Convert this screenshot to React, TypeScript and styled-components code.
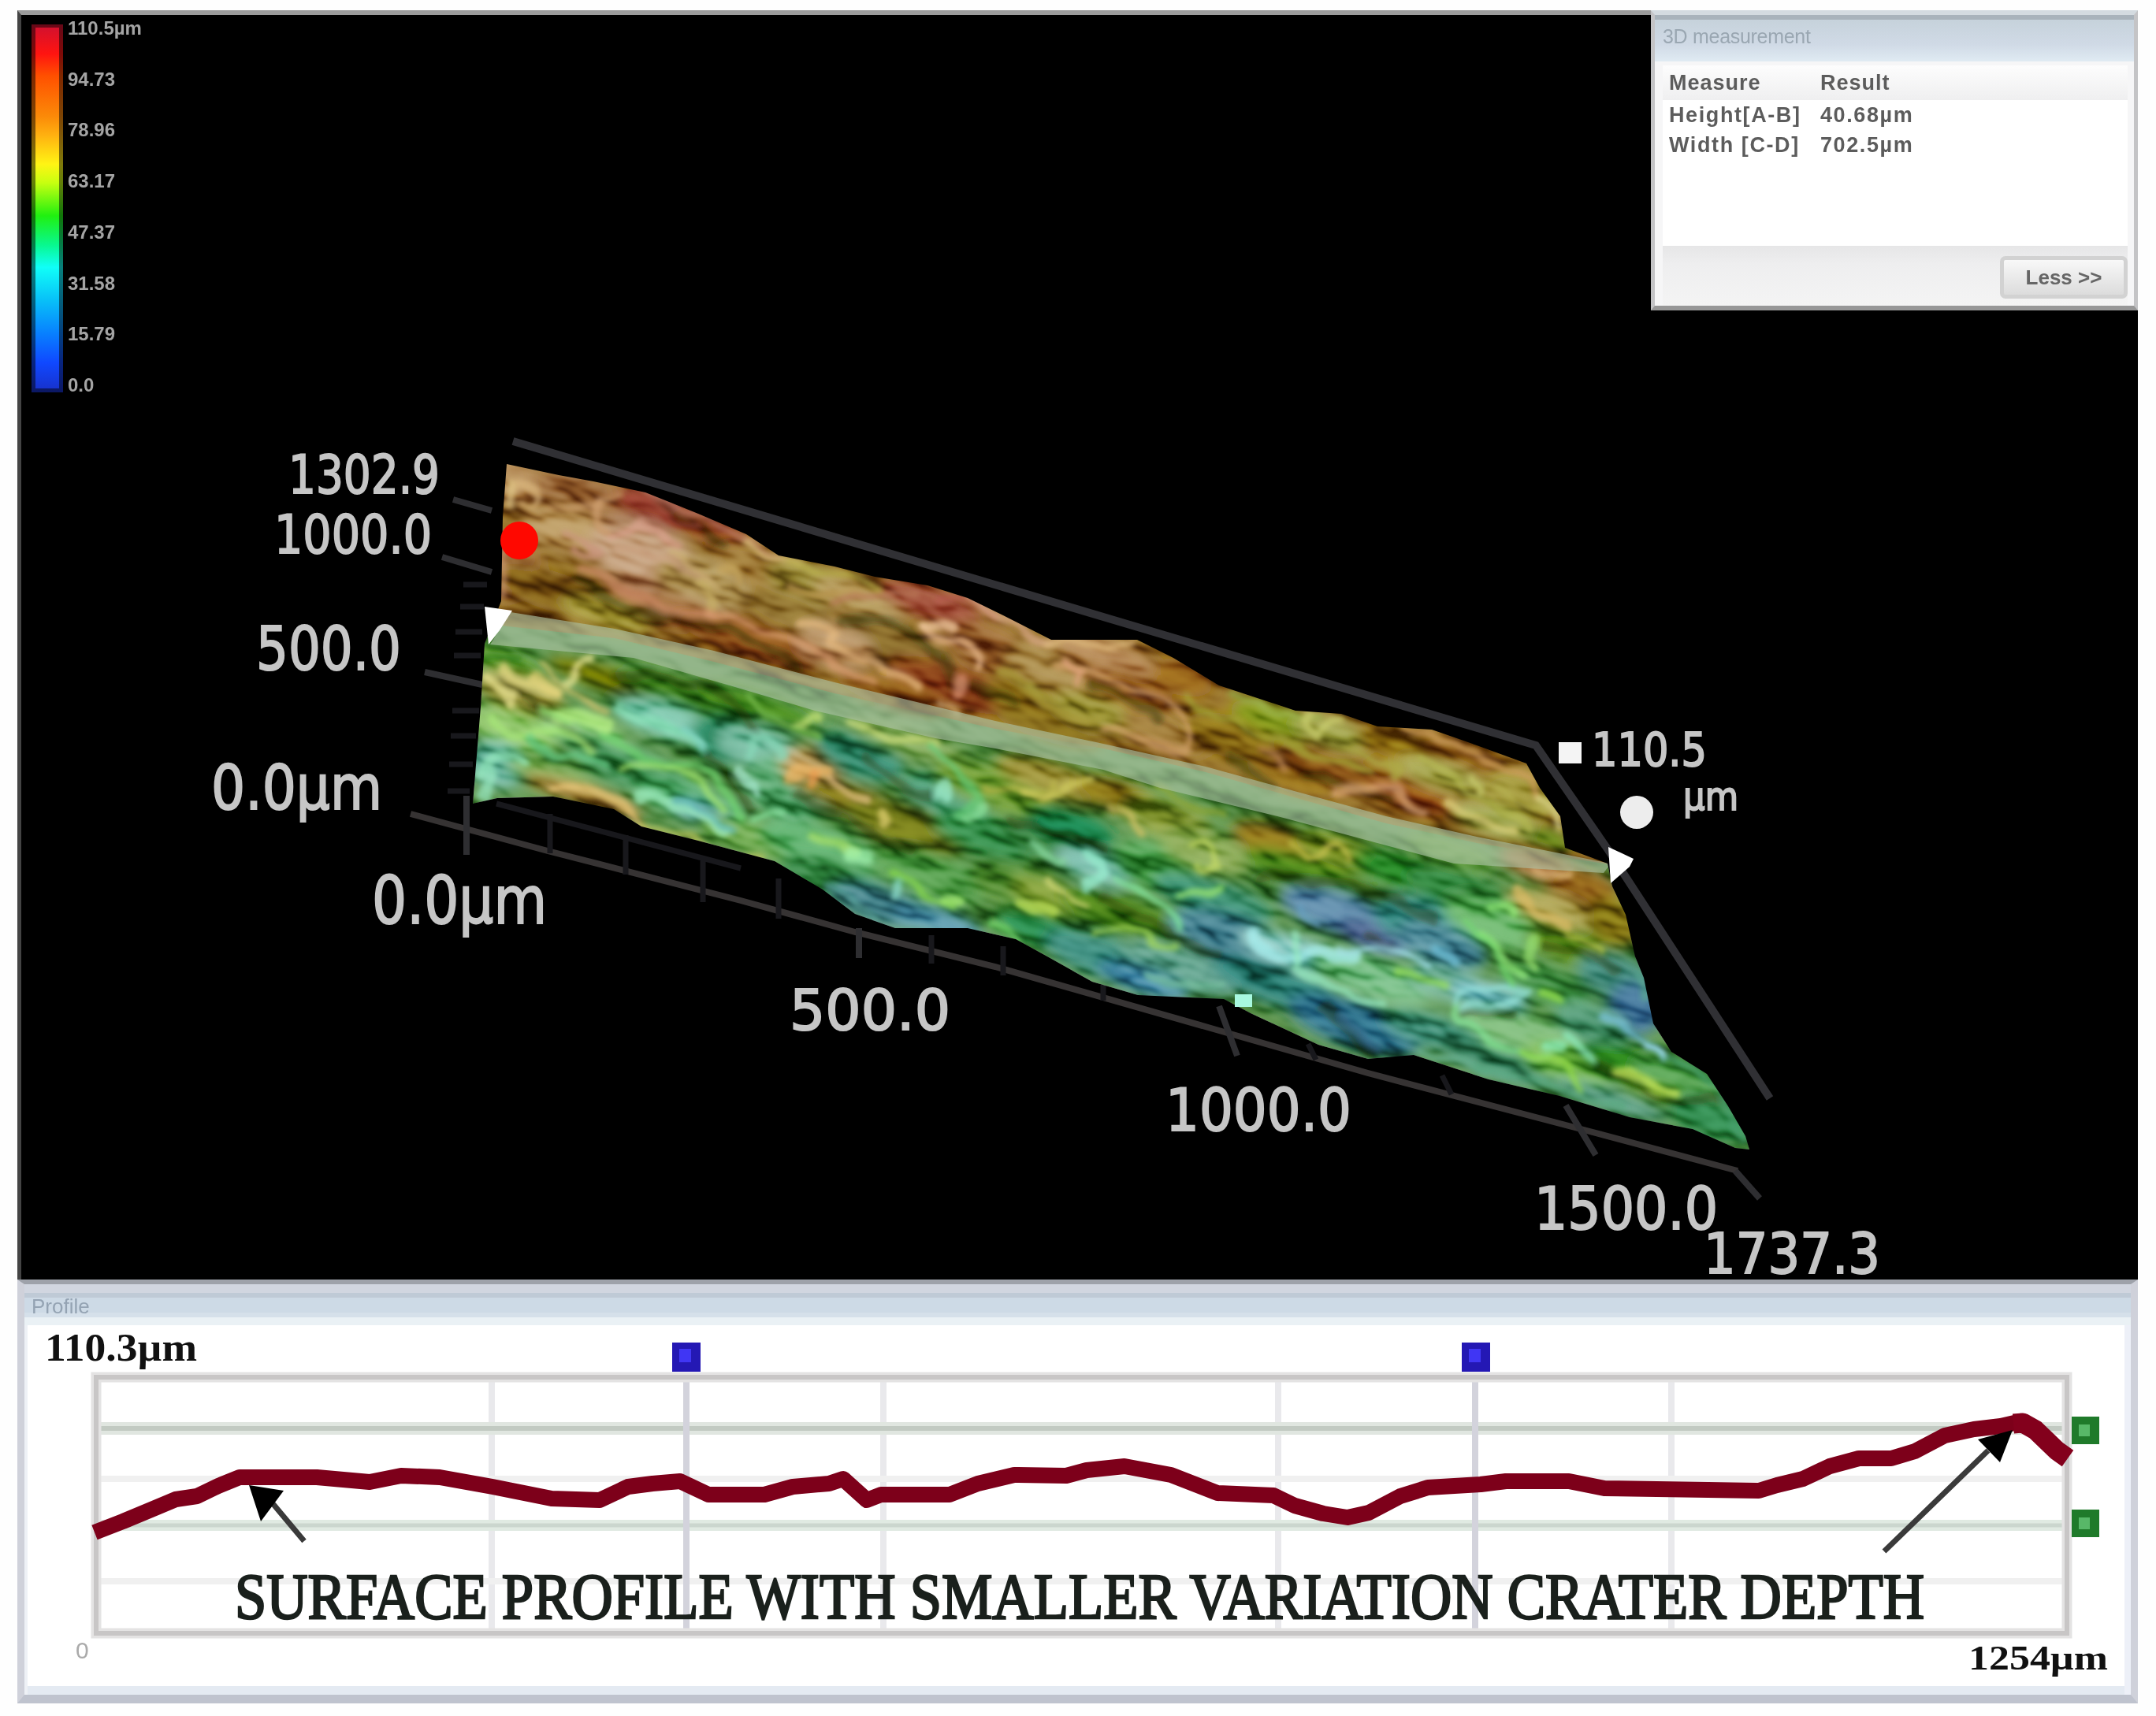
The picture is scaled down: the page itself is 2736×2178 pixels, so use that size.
import React from 'react'
import styled, { createGlobalStyle } from 'styled-components'

const GlobalStyle = createGlobalStyle`
  * {
    box-sizing: border-box;
  }

  body {
    margin: 0;
    background: #fefefe;
  }
`

const Page = styled.div`
  width: 2736px;
  height: 2178px;
  padding: 13px 23px 16px 22px;
  display: flex;
  flex-direction: column;
  background: #fefefe;
  font-family: 'Liberation Sans', Arial, sans-serif;
`

// 3D view. Scene, legend and dialog share one grid cell.
const Viewport = styled.main`
  display: grid;
  grid-template-columns: 1fr;
  grid-template-rows: 1fr;
  height: 1611px;
  border-top: 6px solid #9c9c9c;
  border-left: 5px solid #444;
  background: #000;

  > * {
    grid-area: 1 / 1;
  }
`

const Scene = styled.svg`
  width: 2686px;
  height: 1605px;
  display: block;
  overflow: visible;
`

const Legend = styled.div`
  justify-self: start;
  align-self: start;
  display: flex;
  gap: 6px;
  margin: 12px 0 0 13px;
`

const ColorScale = styled.div`
  width: 40px;
  height: 467px;
  border: 5px solid rgba(0, 0, 0, 0.5);
  border-top-width: 4px;
  background: linear-gradient(
    #d01030 0%,
    #ff1410 8%,
    #ff5000 14%,
    #fb8a08 25%,
    #ffb010 30%,
    #fff414 38%,
    #c8ff10 43%,
    #20f010 52%,
    #08f890 60%,
    #10fff8 66%,
    #08c0f8 75%,
    #0880ff 84%,
    #1048ff 92%,
    #1830c8 100%
  );
  background-origin: border-box;
`

const ScaleLabels = styled.div`
  display: flex;
  flex-direction: column;
  justify-content: space-between;
  height: 477px;
  margin-top: -7px;
  color: #a4a4a4;
  font-size: 24px;
  font-weight: bold;
  line-height: 24px;
`

const Dialog = styled.section`
  justify-self: end;
  align-self: start;
  display: flex;
  flex-direction: column;
  width: 618px;
  height: 381px;
  margin-top: -6px;
  padding: 0 8px 0 10px;
  border: 5px solid #c4c4c6;
  border-top: 6px solid #d4dbe0;
  border-bottom: 6px solid #979797;
  background: #f6f6f7;
`

const DialogTitle = styled.h2`
  height: 59px;
  margin: 0 -8px 0 -10px;
  padding: 7px 10px;
  border-top: 6px solid #a9b3bb;
  background: linear-gradient(#c6d2db, #d0dae6 60%, #e0ebf3);
  color: #9aa7b2;
  font-size: 25px;
  font-weight: normal;
  letter-spacing: -0.3px;
  line-height: 28px;
`

const ResultList = styled.div`
  flex: 1;
  margin-top: 5px;
  background: #fff;
`

const ResultRow = styled.div<{ $head?: boolean }>`
  display: grid;
  grid-template-columns: 192px 1fr;
  align-items: center;
  height: ${({ $head }) => ($head ? 44 : 38)}px;
  padding-left: 8px;
  background: ${({ $head }) => ($head ? 'linear-gradient(#fdfdfd, #efeff0)' : 'transparent')};
  color: #5c5c5c;
  font-size: 27px;
  font-weight: bold;
  letter-spacing: ${({ $head }) => ($head ? 1 : 1.6)}px;
  white-space: pre;
`

const DialogFooter = styled.div`
  display: flex;
  justify-content: flex-end;
  height: 76px;
  padding-top: 13px;
  background: linear-gradient(#e6e6e7, #eeeeef 30%, #f4f4f4);
`

const DialogButton = styled.button`
  width: 162px;
  height: 54px;
  border: 5px solid #d2d2d2;
  border-radius: 7px;
  background: linear-gradient(#f8f8f8, #dcdcdc);
  color: #666;
  font: bold 26px 'Liberation Sans', Arial, sans-serif;
`

const ProfilePanel = styled.section`
  display: flex;
  flex-direction: column;
  width: 2691px;
  height: 538px;
  border: 9px solid #cfd1da;
  border-top: 6px solid #9ea2aa;
  border-bottom: 11px solid #bfc3ce;
  background: #fff;
  box-shadow: inset 4px 0 0 #eef1f6, inset -8px 0 0 #edf0f8, inset 0 -11px 0 #e4eaf2;
`

const ProfileTitle = styled.h2`
  flex: none;
  height: 52px;
  margin: 0;
  padding: 12px 9px 0;
  background: linear-gradient(#d1d6e0 0 11px, #bfcad6 11px 17px, #cddae6 17px 36px, #d5e0ea 36px 42px, #eaf1f5 42px);
  color: #94a3b3;
  font-size: 26px;
  font-weight: normal;
  line-height: 32px;
`

const Chart = styled.svg`
  flex: none;
  width: 2673px;
  height: 340px;
  display: block;
  overflow: visible;
`

const ScaleValue = styled.div<{ $size: number; $stretch: number }>`
  transform: scaleX(${({ $stretch }) => $stretch});
  transform-origin: left;
  color: #111;
  font-family: 'Liberation Serif', 'Times New Roman', serif;
  font-size: ${({ $size }) => $size}px;
  font-weight: bold;
  line-height: 1;
`

const ChartTop = styled.div`
  flex: none;
  height: 57px;
  padding: 3px 0 0 26px;
`

const ChartBottom = styled.div`
  display: flex;
  justify-content: space-between;
  padding: 4px 56px 0 65px;
`

const Origin = styled.span`
  color: #aaa;
  font-size: 30px;
  line-height: 24px;
`

const scaleLabels = ['110.5µm', '94.73', '78.96', '63.17', '47.37', '31.58', '15.79', '0.0']

const results = [
  ['Height[A-B]', '40.68µm'],
  ['Width [C-D]', '702.5µm'],
]

// text, x, baseline, width, font size
const axisLabels: [string, number, number, number, number][] = [
  ['1302.9', 366, 626, 192, 67],
  ['1000.0', 348, 702, 200, 67],
  ['500.0', 325, 850, 184, 76],
  ['0.0µm', 268, 1027, 217, 78],
  ['0.0µm', 472, 1172, 222, 84],
  ['500.0', 1002, 1307, 204, 72],
  ['1000.0', 1479, 1435, 236, 74],
  ['1500.0', 1947, 1560, 233, 74],
  ['1737.3', 2162, 1616, 224, 72],
  ['110.5', 2020, 972, 146, 58],
  ['µm', 2136, 1028, 70, 50],
]

const outline =
  'M643 589 L709 603 L753 611 L819 625 L886 652 L947 678 L988 705 L1059 719 L1110 732 L1177 743 L1228 759 L1273 781 L1334 812 L1443 812 L1489 835 L1547 870 L1644 902 L1702 906 L1748 922 L1817 926 L1874 946 L1937 969 L1954 1000 L1980 1036 L1986 1076 L2040 1096 L2046 1125 L2063 1161 L2075 1214 L2086 1241 L2098 1299 L2121 1335 L2166 1363 L2193 1404 L2215 1442 L2220 1459 L2202 1457 L2148 1433 L2068 1418 L1979 1391 L1889 1370 L1794 1339 L1736 1344 L1673 1326 L1587 1286 L1553 1268 L1444 1263 L1386 1246 L1329 1214 L1289 1192 L1228 1178 L1136 1178 L1085 1160 L1044 1129 L983 1093 L886 1067 L814 1049 L779 1027 L702 1011 L631 1013 L600 1020 L610 897 L615 817 L636 763 L638 656 Z'

const upperHalf =
  'M600 560 L2060 900 L2060 1100 L1874 1070 L1759 1045 L1530 980 L1400 950 L1263 925 L1059 880 L906 840 L780 810 L600 790 Z'

const band =
  'M648 777 L780 798 L906 826 L1059 866 L1263 915 L1400 944 L1530 973 L1759 1036 L1874 1062 L2044 1096 L2035 1108 L1845 1096 L1759 1073 L1621 1036 L1472 1000 L1400 977 L1263 950 L1187 937 L1034 902 L926 870 L804 835 L622 818 Z'

// height tint: x, y, rx, ry, colour
const patches: [number, number, number, number, string][] = [
  [650, 610, 40, 30, '#a07038'],
  [640, 720, 50, 40, '#8a5020'],
  [740, 630, 70, 30, '#8a5426'],
  [720, 670, 60, 30, '#a88042'],
  [700, 750, 80, 25, '#6e4a0c'],
  [770, 780, 60, 18, '#948828'],
  [835, 645, 60, 24, '#7a2414'],
  [900, 670, 50, 18, '#7c2c10'],
  [815, 705, 70, 40, '#b48860'],
  [890, 740, 60, 30, '#a88c4c'],
  [860, 775, 90, 22, '#8a5020'],
  [950, 810, 100, 24, '#783808'],
  [960, 720, 60, 25, '#8c6420'],
  [1030, 740, 60, 25, '#8c7c2c'],
  [1000, 775, 60, 24, '#7c5c1c'],
  [1090, 760, 60, 22, '#a48440'],
  [1180, 765, 70, 22, '#8c3420'],
  [1130, 815, 60, 30, '#705018'],
  [1060, 820, 50, 26, '#a87c48'],
  [1210, 870, 90, 26, '#742c08'],
  [1130, 880, 70, 18, '#7c4410'],
  [1250, 820, 50, 30, '#8c5420'],
  [1330, 850, 60, 28, '#987430'],
  [1310, 890, 60, 24, '#7c5c10'],
  [1400, 830, 70, 20, '#a06a34'],
  [1330, 925, 70, 16, '#6c5008'],
  [1430, 880, 60, 28, '#80440c'],
  [1390, 905, 60, 22, '#8c8428'],
  [1500, 860, 40, 22, '#844c10'],
  [1480, 930, 60, 22, '#8c6424'],
  [1560, 935, 60, 26, '#7c5c0c'],
  [1620, 915, 60, 20, '#688010'],
  [1690, 930, 50, 20, '#8c9030'],
  [1690, 975, 70, 20, '#783c08'],
  [1640, 990, 60, 16, '#805410'],
  [1770, 945, 50, 18, '#886808'],
  [1860, 965, 60, 20, '#7c4808'],
  [1790, 1010, 60, 18, '#843c0c'],
  [1830, 985, 60, 18, '#909030'],
  [1930, 1010, 50, 30, '#8c8020'],
  [1900, 1045, 60, 20, '#8c9438'],
  [1965, 1070, 30, 20, '#486c08'],
  [640, 840, 50, 14, '#3c8418'],
  [660, 880, 60, 24, '#908c34'],
  [650, 925, 60, 24, '#78b850'],
  [630, 970, 40, 30, '#58a890'],
  [740, 930, 60, 22, '#80c868'],
  [780, 865, 90, 16, '#545c04'],
  [870, 880, 90, 20, '#347818'],
  [700, 985, 60, 16, '#68a040'],
  [740, 1010, 80, 14, '#8c6820'],
  [820, 985, 90, 26, '#38884c'],
  [780, 955, 80, 16, '#3c8c50'],
  [845, 915, 70, 22, '#60b898'],
  [920, 940, 50, 30, '#1c7850'],
  [880, 1020, 80, 22, '#409c58'],
  [900, 1035, 50, 14, '#5098a0'],
  [970, 950, 60, 26, '#58a888'],
  [960, 895, 80, 18, '#286c08'],
  [1000, 1000, 60, 40, '#489c60'],
  [1030, 975, 40, 26, '#b09050'],
  [1090, 960, 60, 28, '#207858'],
  [1080, 1015, 80, 20, '#685c08'],
  [1150, 1050, 80, 28, '#5c6408'],
  [960, 1065, 80, 20, '#60a040'],
  [1040, 1075, 80, 26, '#409c50'],
  [1060, 1120, 80, 26, '#2c7c38'],
  [1120, 1150, 70, 24, '#3c7c84'],
  [1190, 1170, 60, 18, '#40849c'],
  [1180, 1110, 80, 28, '#3c8c34'],
  [1200, 1010, 60, 26, '#30885c'],
  [1150, 940, 80, 18, '#68943c'],
  [1260, 1000, 80, 26, '#5c8c20'],
  [1250, 1060, 70, 26, '#207c34'],
  [1340, 990, 80, 22, '#887c20'],
  [1300, 1130, 70, 30, '#407c20'],
  [1330, 1070, 60, 22, '#206c2c'],
  [1360, 1050, 60, 24, '#0c6c30'],
  [1390, 1100, 50, 20, '#64b09c'],
  [1340, 1140, 60, 20, '#6c8c20'],
  [1320, 1180, 60, 22, '#187430'],
  [1420, 1010, 60, 20, '#7c6410'],
  [1480, 1040, 60, 24, '#788c28'],
  [1470, 1100, 60, 30, '#3c9440'],
  [1420, 1160, 80, 26, '#306c10'],
  [1400, 1215, 80, 26, '#287868'],
  [1500, 1230, 80, 26, '#489078'],
  [1450, 1245, 60, 16, '#30789c'],
  [1530, 1080, 60, 26, '#709438'],
  [1620, 1070, 60, 22, '#7c5c0c'],
  [1540, 1140, 80, 24, '#287c58'],
  [1560, 1190, 80, 30, '#307080'],
  [1700, 1080, 60, 20, '#688018'],
  [1660, 1110, 90, 22, '#307010'],
  [1700, 1160, 80, 26, '#407094'],
  [1745, 1190, 50, 18, '#344c7c'],
  [1650, 1210, 80, 20, '#78c0b8'],
  [1620, 1250, 90, 26, '#1c6c60'],
  [1720, 1300, 90, 30, '#1c5c78'],
  [1790, 1110, 80, 20, '#147414'],
  [1800, 1170, 60, 30, '#20746c'],
  [1840, 1080, 60, 16, '#4c8c28'],
  [1740, 1240, 80, 26, '#60b070'],
  [1830, 1200, 60, 26, '#3c7c8c'],
  [1850, 1130, 70, 26, '#1c7028'],
  [1900, 1170, 70, 30, '#50a450'],
  [1840, 1250, 60, 22, '#58a080'],
  [1890, 1265, 50, 16, '#70b8c0'],
  [1820, 1310, 70, 22, '#388870'],
  [1960, 1100, 60, 20, '#985c28'],
  [2010, 1130, 50, 28, '#7c4808'],
  [1970, 1155, 60, 20, '#988c34'],
  [2050, 1170, 40, 30, '#786808'],
  [2000, 1205, 70, 22, '#407408'],
  [1960, 1250, 60, 24, '#348438'],
  [2050, 1240, 50, 28, '#2c7464'],
  [2075, 1280, 36, 34, '#2c5c84'],
  [1930, 1310, 80, 26, '#60a85c'],
  [2020, 1300, 50, 26, '#38845c'],
  [1900, 1350, 80, 20, '#307c58'],
  [1990, 1350, 60, 24, '#60a838'],
  [2060, 1350, 60, 24, '#186c10'],
  [2130, 1370, 60, 26, '#3c9038'],
  [2110, 1400, 60, 20, '#4c8410'],
  [2040, 1395, 80, 14, '#40886c'],
  [2170, 1420, 60, 26, '#1c7434'],
]

// ridge lines: path, colour, width
const ridges: [string, string, number][] = [
  ['M650 612 q20 -6 38 12 q-10 26 -28 8', '#dcb880', 9],
  ['M646 612 v26', '#e0c888', 12],
  ['M700 640 l30 6 28 -4 28 -16', '#c89a68', 8],
  ['M760 640 q-12 20 6 34', '#d0a070', 9],
  ['M790 632 l40 8 26 22 30 6', '#ac5040', 7],
  ['M818 625 L886 652 L947 680 L988 708', '#bc7868', 9],
  ['M770 682 l40 -18 28 8 28 24', '#dca490', 9],
  ['M780 700 q30 -12 60 6 t50 24', '#cca484', 12],
  ['M715 680 q30 0 40 24 q-20 4 -26 -8', '#cc9480', 8],
  ['M740 722 q46 20 74 38 t90 24', '#cc8c68', 10],
  ['M852 700 q40 34 60 40', '#ccb074', 9],
  ['M884 738 q30 20 20 34', '#c8b068', 14],
  ['M640 690 v60', '#c8946c', 9],
  ['M910 716 q34 4 30 20', '#c8a860', 8],
  ['M948 684 q16 22 60 32', '#dcc47c', 10],
  ['M1000 716 l60 12 60 14', '#b8b048', 9],
  ['M1000 745 l40 6 60 6', '#bc9850', 7],
  ['M1060 765 q40 -2 60 -16 l40 4', '#b87858', 8],
  ['M900 782 q60 6 90 24 q40 14 60 34 q16 16 60 26', '#d89c70', 10],
  ['M1012 788 q40 0 48 18 q-18 12 10 24 q40 4 80 30 l14 10', '#e8bc84', 11],
  ['M1176 790 q14 24 40 22 q30 16 24 36', '#ecbc90', 11],
  ['M1176 790 l30 4', '#f0c8a0', 12],
  ['M1190 764 q40 -6 70 16', '#b85c50', 9],
  ['M1228 759 L1273 785 L1330 814', '#d8a888', 11],
  ['M1330 816 h110', '#e0bc80', 9],
  ['M1218 866 v14', '#dc9474', 16],
  ['M1195 890 l20 14', '#dcb478', 10],
  ['M1270 850 q50 30 60 50 q20 12 60 12', '#a89838', 12],
  ['M1340 845 q40 0 60 14 q50 12 80 34 q40 20 30 60 l-60 -14 q-10 -10 -50 -12', '#d4a46c', 10],
  ['M1352 840 l24 10 -6 14', '#e0a480', 9],
  ['M1310 874 q40 30 90 34', '#a8a040', 10],
  ['M1510 885 q50 40 110 46 l60 36 60 10', '#a4a838', 8],
  ['M1560 878 l60 26 50 8', '#a0b850', 8],
  ['M1660 906 q-8 20 12 26 q10 -20 34 -18', '#ccd070', 9],
  ['M1600 950 q20 4 34 20', '#c08c54', 9],
  ['M1690 940 q40 24 70 24 q20 10 14 20', '#b0b048', 9],
  ['M1690 1006 q40 -8 84 -10 q10 24 36 34', '#e0ac78', 12],
  ['M1780 928 l40 2 60 30 60 24 14 30', '#d0a060', 9],
  ['M1800 960 q50 26 90 60 l50 30', '#b4b850', 9],
  ['M1870 980 q18 10 10 24', '#ccd070', 8],
  ['M1836 1020 q40 26 80 34', '#e0d480', 12],
  ['M1900 1000 q20 30 60 30', '#bcb858', 8],
  ['M1954 1014 l24 14 v20', '#e0dc90', 10],
  ['M622 838 h40', '#30801c', 10],
  ['M640 850 q40 30 70 34', '#e4d884', 11],
  ['M620 862 q24 14 30 30 v-10', '#ece494', 14],
  ['M686 842 q40 40 80 60', '#d4c470', 8],
  ['M728 850 q10 -16 26 -14 M730 852 l-8 14', '#ece898', 10],
  ['M676 860 l34 20', '#ecd880', 14],
  ['M620 905 q10 30 50 22 t80 26', '#a8e878', 10],
  ['M705 910 q30 -8 60 10', '#bcf488', 18],
  ['M610 980 q20 -26 60 -16', '#98ecc0', 14],
  ['M612 1012 l14 -30', '#98e8c0', 16],
  ['M670 930 q26 30 60 32 l40 4', '#68cc88', 8],
  ['M690 900 l30 18', '#8cd870', 8],
  ['M700 1002 q60 -4 80 8 q30 22 40 38', '#f0cc80', 12],
  ['M814 1044 q60 24 150 46', '#c0c860', 9],
  ['M780 895 q20 24 44 24 l60 18', '#94e8c0', 14],
  ['M870 925 q20 10 22 24', '#84d8c8', 10],
  ['M760 930 q60 34 100 38 t60 34 l20 34', '#70d470', 9],
  ['M790 970 q60 -8 90 16 q20 20 40 40', '#a8e870', 9],
  ['M810 1008 q30 -6 50 16 q30 6 60 26', '#a0f0c0', 14],
  ['M860 1015 q40 16 70 36', '#60b4b4', 8],
  ['M935 980 q16 10 24 24', '#b0f0d8', 14],
  ['M950 960 q10 -30 30 -26 q20 20 16 30', '#88d8b8', 10],
  ['M955 1040 l40 -8', '#88e4a0', 10],
  ['M1004 988 q16 -16 40 -14', '#f0b868', 16],
  ['M1028 978 v18', '#ec9c50', 14],
  ['M1050 982 q20 20 50 32', '#e0bc84', 9],
  ['M1010 920 q30 -14 30 -6', '#c8e478', 14],
  ['M1080 915 l50 20 60 10', '#d0e080', 9],
  ['M950 880 q40 40 90 56', '#84c858', 7],
  ['M1190 1002 q10 -8 18 4', '#a0f0d0', 18],
  ['M1180 950 q40 24 60 60 l-20 24', '#68cc78', 9],
  ['M1230 1034 q14 -6 12 -14', '#90e8a0', 12],
  ['M1250 1000 h40 l30 12 q20 -10 14 -22', '#bcb84c', 8],
  ['M1120 1030 l6 14', '#e4d474', 12],
  ['M1030 1056 q40 20 60 24', '#b0e470', 12],
  ['M1080 1082 l24 6', '#a4f4b0', 16],
  ['M1130 1110 q40 24 80 40', '#88d84c', 9],
  ['M1200 1140 q10 0 20 4', '#a8f070', 14],
  ['M1132 1124 v14', '#90e0d0', 12],
  ['M1050 1128 q40 20 60 36', '#60a8a0', 9],
  ['M1308 1072 q20 20 40 20', '#90e0a8', 9],
  ['M1380 1090 q20 4 24 16 l-20 16', '#98f0d0', 14],
  ['M1330 1110 q24 26 50 36', '#d4d878', 9],
  ['M1300 1150 q20 -10 36 6', '#b8dc50', 16],
  ['M1260 1172 q20 4 30 20', '#7cdc70', 10],
  ['M1300 1004 q20 6 50 -4 l30 -10', '#d0cc60', 10],
  ['M1410 1020 q20 14 36 36', '#d4c468', 10],
  ['M1470 1000 q40 30 80 34', '#90a838', 8],
  ['M1506 1068 q30 -10 40 10 v20 q-20 14 -30 0', '#c8dc68', 8],
  ['M1420 1110 q40 20 60 40 t20 30', '#84e8a0', 9],
  ['M1500 1130 h50', '#9ce870', 9],
  ['M1390 1180 q30 -6 60 10 t40 10', '#a4d85c', 8],
  ['M1590 1186 q10 24 30 26 h100', '#a8f0f0', 13],
  ['M1640 1186 q6 24 0 40 q60 40 120 46', '#98ecc0', 11],
  ['M1700 1204 h60 l50 14', '#a8e4f0', 9],
  ['M1780 1240 q40 -6 50 6', '#98e058', 10],
  ['M1640 1070 l20 12 40 -14 16 20', '#c8c050', 9],
  ['M1820 1200 q20 6 24 16', '#70c0d8', 12],
  ['M1650 1150 q10 20 30 24', '#68a0c0', 9],
  ['M1850 1270 q0 -14 60 -16 l30 6 -30 16 -50 4', '#98e4dc', 9],
  ['M1850 1276 q-6 20 20 36 t100 30', '#88e898', 9],
  ['M1896 1150 q14 0 20 10 M1880 1185 q30 24 50 50', '#98f080', 12],
  ['M1860 1170 q40 30 60 80', '#74d870', 8],
  ['M1950 1190 q-12 20 -4 30', '#98e070', 11],
  ['M1920 1134 q20 24 40 26 l34 8', '#dcbc68', 12],
  ['M1950 1106 h40', '#e0b880', 11],
  ['M1990 1180 l40 26', '#c8d050', 9],
  ['M1960 1265 h20', '#94e048', 14],
  ['M1966 1325 l20 10 M1990 1320 l30 20', '#90f0c0', 12],
  ['M1930 1332 l60 20 20 30', '#94dc48', 9],
  ['M2040 1290 q40 16 70 52', '#78c0d8', 10],
  ['M2090 1326 l20 10', '#a8e8f8', 10],
  ['M2054 1358 q40 16 72 22', '#d0ec60', 11],
  ['M2120 1340 q50 20 70 70 l20 40', '#48a070', 8],
  ['M2076 1234 q12 10 12 30', '#58a890', 8],
  ['M1800 1338 l60 6 60 24', '#68b090', 8],
  ['M1880 1350 q80 34 180 52', '#58a880', 7],
  ['M1460 1235 l60 20 30 -6', '#78c0a0', 10],
  ['M1700 1290 q30 20 50 40', '#386c90', 8],
]

const shadows = [
  'M835 640 q40 14 80 50',
  'M740 736 q50 40 120 50 t150 60',
  'M1070 790 q30 -10 80 10 t60 70 l80 20',
  'M1390 868 q50 12 76 46',
  'M780 856 l120 14 70 60',
  'M900 960 q30 40 50 70',
  'M1100 960 q30 40 80 50',
  'M1280 1040 l120 40',
  'M1400 1140 q60 40 140 70',
  'M1660 985 l110 30',
  'M1600 1110 l140 20 80 40',
  'M1730 1180 q20 20 40 24',
  'M1860 1290 l60 -6',
  'M1960 1200 q60 10 90 30',
  'M1680 1280 l60 50',
  'M2020 1340 l80 50 80 10',
  'M1560 960 l60 40',
  'M640 860 q60 60 110 90',
  'M1010 1010 q60 30 150 70',
]

const ticks =
  'M575 634 L624 648 M561 707 L624 726 M539 853 L612 869 M592 1010 V1085 M1090 1178 V1216 M1547 1277 L1570 1340 M1987 1403 L2025 1466 M2202 1486 L2233 1521'

const faintTicks =
  'M698 1033 V1083 M794 1060 V1110 M892 1090 V1145 M988 1115 V1166 M1182 1187 V1223 M1273 1201 V1238 M1400 1250 V1270 M1660 1325 l10 20 M1830 1365 l12 24 M588 742 h30 M584 770 h30 M578 802 h34 M576 832 h34 M574 902 h34 M572 934 h32 M570 970 h30 M568 1004 h28 M630 1020 L940 1102'

const profilePoints =
  '120,1946 156,1932 192,1917 223,1904 250,1900 277,1887 304,1876 402,1876 469,1882 509,1874 558,1876 625,1888 700,1903 761,1905 797,1888 828,1884 863,1881 899,1898 970,1898 1006,1888 1052,1884 1070,1878 1100,1905 1118,1898 1205,1898 1241,1884 1287,1873 1353,1874 1379,1867 1427,1862 1486,1873 1545,1896 1616,1899 1643,1912 1679,1922 1710,1927 1737,1921 1777,1900 1812,1889 1879,1885 1911,1881 1991,1881 2036,1890 2232,1893 2255,1886 2288,1878 2322,1862 2359,1852 2400,1852 2430,1843 2468,1823 2505,1815 2539,1811 2565,1805'

const SurfaceView = () => (
  <Scene viewBox="27 19 2686 1605">
    <defs>
      <clipPath id="surface">
        <path d={outline} />
      </clipPath>
      <filter id="soft" x="-30%" y="-60%" width="160%" height="220%">
        <feGaussianBlur stdDeviation="8" />
      </filter>
      <filter id="ridge" filterUnits="userSpaceOnUse" x="560" y="540" width="1720" height="980">
        <feTurbulence type="fractalNoise" baseFrequency="0.02" numOctaves="2" seed="4" result="n" />
        <feDisplacementMap in="SourceGraphic" in2="n" scale="26" xChannelSelector="R" yChannelSelector="G" />
        <feGaussianBlur stdDeviation="3" />
      </filter>
      <filter id="relief" filterUnits="userSpaceOnUse" x="500" y="-400" width="2200" height="1700">
        <feTurbulence type="fractalNoise" baseFrequency="0.011 0.026" numOctaves="3" seed="11" />
        <feDiffuseLighting surfaceScale="26" diffuseConstant="0.72" lightingColor="#fff">
          <feDistantLight azimuth="250" elevation="38" />
        </feDiffuseLighting>
        <feGaussianBlur stdDeviation="2.6" />
      </filter>
    </defs>

    <polyline points="651,560 1390,780 1949,946 2041,1079 2246,1394" fill="none" stroke="#303034" strokeWidth="10" />
    <polyline points="521,1033 695,1080 940,1143 1085,1183 1263,1227 1547,1308 1736,1362 2006,1433 2205,1486" fill="none" stroke="#363333" strokeWidth="8" />
    <path d={ticks} fill="none" stroke="#2e2e31" strokeWidth="8" />
    <path d={faintTicks} fill="none" stroke="#18181c" strokeWidth="7" />

    <g clipPath="url(#surface)">
      <path d={outline} fill="#3f7a30" />
      <path d={upperHalf} fill="#7c5416" />
      <g filter="url(#soft)">
        {patches.map(([x, y, rx, ry, color], i) => (
          <ellipse key={i} cx={x} cy={y} rx={rx} ry={ry} fill={color} transform={`rotate(18 ${x} ${y})`} />
        ))}
      </g>
      <g transform="rotate(20)" style={{ mixBlendMode: 'soft-light' }}>
        <rect x="500" y="-400" width="2200" height="1700" filter="url(#relief)" />
      </g>
      <g filter="url(#ridge)" fill="none" strokeLinecap="round" strokeLinejoin="round">
        {shadows.map((d) => (
          <path key={d} d={d} stroke="#1c2800" strokeWidth="12" opacity="0.4" />
        ))}
        {ridges.map(([d, color, width]) => (
          <path key={d} d={d} transform="translate(0 1)" stroke={color} strokeWidth={width} opacity="0.72" />
        ))}
      </g>
      <path d={band} fill="#adc4a6" opacity="0.62" />
    </g>

    <rect x="1567" y="1262" width="22" height="16" fill="#a8f8e0" />
    <circle cx="659" cy="686" r="24" fill="#ff0800" />
    <path d="M615 770 L650 775 L634 800 L620 818 Z" fill="#fff" />
    <path d="M2041 1075 L2073 1090 L2068 1100 L2044 1121 Z" fill="#fff" />
    <rect x="1978" y="942" width="29" height="27" fill="#f4f4f4" />
    <circle cx="2077" cy="1031" r="21" fill="#ededed" />

    <g fill="#c6c6c6" stroke="#c6c6c6" strokeWidth="2" fontFamily="'DejaVu Sans', sans-serif">
      {axisLabels.map(([text, x, y, width, size]) => (
        <text key={`${text}${x}`} x={x} y={y} fontSize={size} textLength={width} lengthAdjust="spacingAndGlyphs">
          {text}
        </text>
      ))}
    </g>
  </Scene>
)

const ProfileChart = () => (
  <Chart viewBox="31 1740 2673 340">
    <g fill="none" strokeWidth="8">
      <path d="M624 1749 V2074 M1121 1749 V2074 M1622 1749 V2074 M2121 1749 V2074" stroke="#e9e9ec" />
      <path d="M122 1878 H2623 M122 2008 H2623" stroke="#f0f0f0" />
      <path d="M122 1937 H2623" stroke="#e0eae2" strokeWidth="14" />
      <path d="M122 1937 H2623" stroke="#cbd6ce" strokeWidth="5" />
      <path d="M122 1814 H2623" stroke="#e0e6e0" strokeWidth="16" />
      <path d="M122 1814 H2623" stroke="#c2cac2" strokeWidth="6" />
      <path d="M871 1749 V2074 M1872 1749 V2074" stroke="#d3d3dc" />
      <rect x="122" y="1749" width="2501" height="325" stroke="#e4e3e3" strokeWidth="13" />
      <rect x="122" y="1749" width="2501" height="325" stroke="#c8c6c6" strokeWidth="6" />
    </g>
    {[871, 1873].map((x) => (
      <g key={x}>
        <rect x={x - 18} y="1705" width="36" height="37" fill="#2418b4" />
        <rect x={x - 9} y="1713" width="15" height="17" fill="#4036f4" />
      </g>
    ))}
    {[1817, 1935].map((y) => (
      <g key={y}>
        <rect x="2629" y={y - 18} width="35" height="35" fill="#1f7a2a" />
        <rect x="2638" y={y - 8} width="14" height="15" fill="#58b868" />
      </g>
    ))}
    <polyline points={profilePoints} fill="none" stroke="#7d001a" strokeWidth="20" strokeLinejoin="round" />
    <polyline points="2555,1808 2567,1807 2583,1816 2610,1842 2624,1852" fill="none" stroke="#83001c" strokeWidth="25" strokeLinejoin="round" />
    <path d="M345 1908 L386 1957 M2523 1842 L2391 1970" fill="none" stroke="#3a3a3a" strokeWidth="7" />
    <path d="M316 1886 L360 1893 L331 1932 Z M2510 1828 L2554 1816 L2538 1857 Z" fill="#000" />
    <text
      transform="translate(298 2055) scale(1 1.17)"
      fontFamily="'Liberation Serif', 'Times New Roman', serif"
      fontSize="71"
      textLength="2144"
      lengthAdjust="spacingAndGlyphs"
      fill="#1a201c"
      stroke="#1a201c"
      strokeWidth="2.2"
    >
      SURFACE PROFILE WITH SMALLER VARIATION CRATER DEPTH
    </text>
  </Chart>
)

export default function App() {
  return (
    <Page>
      <GlobalStyle />
      <Viewport>
        <SurfaceView />
        <Legend>
          <ColorScale />
          <ScaleLabels>
            {scaleLabels.map((label) => (
              <span key={label}>{label}</span>
            ))}
          </ScaleLabels>
        </Legend>
        <Dialog>
          <DialogTitle>3D measurement</DialogTitle>
          <ResultList>
            <ResultRow $head>
              <span>Measure</span>
              <span>Result</span>
            </ResultRow>
            {results.map(([name, value]) => (
              <ResultRow key={name}>
                <span>{name}</span>
                <span>{value}</span>
              </ResultRow>
            ))}
          </ResultList>
          <DialogFooter>
            <DialogButton>Less &gt;&gt;</DialogButton>
          </DialogFooter>
        </Dialog>
      </Viewport>
      <ProfilePanel>
        <ProfileTitle>Profile</ProfileTitle>
        <ChartTop>
          <ScaleValue $size={51} $stretch={1.05}>110.3µm</ScaleValue>
        </ChartTop>
        <ProfileChart />
        <ChartBottom>
          <Origin>0</Origin>
          <ScaleValue $size={44} $stretch={1.18}>1254µm</ScaleValue>
        </ChartBottom>
      </ProfilePanel>
    </Page>
  )
}
